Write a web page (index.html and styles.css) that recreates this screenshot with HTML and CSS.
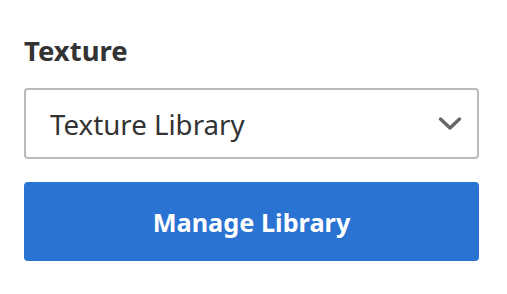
FILE: index.html
```html
<!DOCTYPE html>
<html>
<head>
  <title>Texture</title>
  <meta name="viewport" content="width=device-width, initial-scale=1.0">
  <link rel="stylesheet" href="styles.css">
</head>
<body>
  <div class="panel">
    <div class="panel-title">Texture</div>
    <div class="select-box">
      <span class="select-value">Texture Library</span>
      <svg class="chevron" width="24" height="16" viewBox="0 0 24 16">
        <path d="M2.5 3 L12 12 L21.5 3" fill="none" stroke="#666" stroke-width="3.4" stroke-linecap="round" stroke-linejoin="round"/>
      </svg>
    </div>
    <button class="manage-button">Manage Library</button>
  </div>
</body>
</html>
```

FILE: styles.css
```css
* {
  margin: 0;
  padding: 0;
  box-sizing: border-box;
}

html, body {
  height: 100%;
  background: #fff;
  font-family: "Noto Sans", sans-serif;
}

.panel {
  padding: 33px 28px 0 24px;
  display: flex;
  flex-direction: column;
}

.panel-title {
  font-size: 27.5px;
  font-weight: bold;
  color: #333;
  line-height: 36px;
  margin-bottom: 19px;
}

.select-box {
  height: 71px;
  border: 2px solid #bbb;
  border-radius: 4px;
  display: flex;
  align-items: center;
  justify-content: space-between;
  padding: 0 15px 0 24px;
  margin-bottom: 23px;
}

.select-value {
  font-size: 27.7px;
  color: #333;
}

.manage-button {
  height: 79px;
  border: none;
  border-radius: 4px;
  background-color: #2a73d2;
  color: #fff;
  font-family: "Noto Sans", sans-serif;
  font-size: 25.3px;
  font-weight: bold;
}
```
